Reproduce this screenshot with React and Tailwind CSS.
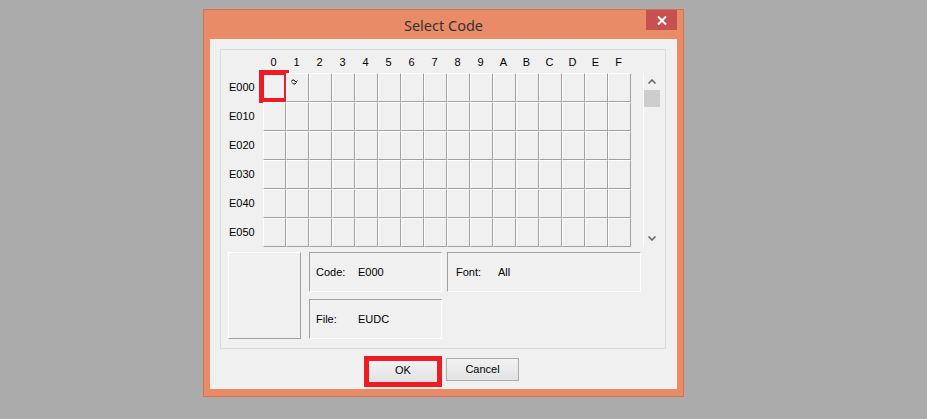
import React from "react";

const cols = ["0","1","2","3","4","5","6","7","8","9","A","B","C","D","E","F"];
const rows = ["E000","E010","E020","E030","E040","E050"];

function Cell({ r, c }) {
  return (
    <div className="relative w-[23px] h-[29px] border border-t-white border-l-white border-r-[#a0a0a0] border-b-[#a0a0a0] bg-[#f0f0f0]">
      {r === 0 && c === 1 && (
        <svg className="absolute left-[4px] top-[5px]" width="7" height="6" viewBox="0 0 7 6">
          <path d="M0.5 2.5 L1.5 1 L3 1 L4 2.5 L5.5 2.5 L6.5 1.5 M1 3.5 L2.5 5 L4 5 L5.5 3.5" fill="none" stroke="#000" strokeWidth="1" />
        </svg>
      )}
      {r === 0 && c === 0 && (
        <div className="absolute left-[-5px] top-[-4px] w-[30px] h-[33px] border-[5px] border-[#ed1c24]" />
      )}
    </div>
  );
}

export default function App() {
  const font = { fontFamily: '"Liberation Sans", Arial, sans-serif' };
  return (
    <div className="w-[927px] h-[419px] bg-[#ababab] pl-[203px] pt-[9px] overflow-hidden" style={font}>
      <div className="w-[481px] h-[388px] bg-[#ea8b67] border border-[#cf7655] flex flex-col">
        {/* title bar */}
        <div className="relative h-[29px] flex items-center justify-center">
          <span
            className="text-[14.5px] text-[#333333] leading-none mt-[1px]"
            style={{ fontFamily: '"Noto Sans", "Open Sans", sans-serif' }}
          >
            Select Code
          </span>
          <div className="absolute right-[6px] top-0 w-[31px] h-[20px] bg-[#c75050] flex items-center justify-center">
            <svg width="10" height="9" viewBox="0 0 10 9">
              <path d="M1 0.5 L9 8.5 M9 0.5 L1 8.5" stroke="#fff" strokeWidth="2" />
            </svg>
          </div>
        </div>
        {/* client */}
        <div className="mx-[6px] w-[467px] h-[350px] bg-[#f0f0f0] pt-[10px] pl-[10px] flex flex-col">
          <div className="w-[446px] h-[300px] border border-[#dcdcdc] flex flex-col text-[11px] text-black">
            {/* header row */}
            <div className="flex h-[23px] items-center">
              <div className="w-[41px]" />
              {cols.map((c) => (
                <div key={c} className="w-[23px] text-center leading-none pt-[1px]">{c}</div>
              ))}
            </div>
            {/* grid + scroll */}
            <div className="flex">
              <div className="w-[42px] flex flex-col">
                {rows.map((r) => (
                  <div key={r} className="h-[29px] flex items-center pl-[8px]">{r}</div>
                ))}
              </div>
              <div className="grid grid-cols-[repeat(16,23px)]">
                {rows.map((r, ri) =>
                  cols.map((c, ci) => <Cell key={r + c} r={ri} c={ci} />)
                )}
              </div>
              <div className="ml-[12px] w-[17px] h-[174px] border-l border-white bg-[#f0f0f0] flex flex-col items-center">
                <div className="h-[17px] w-full flex items-center justify-center">
                  <svg width="8" height="5" viewBox="0 0 8 5">
                    <path d="M0.5 4.5 L4 1 L7.5 4.5" fill="none" stroke="#606060" strokeWidth="1.5" />
                  </svg>
                </div>
                <div className="w-[16px] h-[17px] bg-[#cdcdcd]" />
                <div className="flex-1" />
                <div className="h-[17px] w-full flex items-center justify-center">
                  <svg width="8" height="5" viewBox="0 0 8 5">
                    <path d="M0.5 0.5 L4 4 L7.5 0.5" fill="none" stroke="#606060" strokeWidth="1.5" />
                  </svg>
                </div>
              </div>
            </div>
            {/* bottom info */}
            <div className="flex mt-[5px] ml-[7px]">
              <div className="w-[73px] h-[87px] border border-t-white border-l-white border-r-[#a0a0a0] border-b-[#a0a0a0]" />
              <div className="ml-[8px] flex flex-col gap-[7px]">
                <div className="flex gap-[5px]">
                  <div className="w-[133px] h-[40px] border border-t-[#a0a0a0] border-l-[#a0a0a0] border-r-white border-b-white flex items-center">
                    <span className="w-[48px] shrink-0 pl-[6px]">Code:</span>
                    <span>E000</span>
                  </div>
                  <div className="w-[194px] h-[40px] border border-t-[#a0a0a0] border-l-[#a0a0a0] border-r-white border-b-white flex items-center">
                    <span className="w-[50px] shrink-0 pl-[8px]">Font:</span>
                    <span>All</span>
                  </div>
                </div>
                <div className="w-[133px] h-[40px] border border-t-[#a0a0a0] border-l-[#a0a0a0] border-r-white border-b-white flex items-center">
                  <span className="w-[48px] shrink-0 pl-[6px]">File:</span>
                  <span>EUDC</span>
                </div>
              </div>
            </div>
          </div>
          {/* buttons */}
          <div className="flex items-start ml-[144px] mt-[7px] text-[11px] text-black">
            <div className="w-[78px] h-[31px] border-[5px] border-[#ed1c24]">
              <div className="w-full h-full bg-gradient-to-b from-[#f2f2f2] to-[#e3e3e3] flex items-center justify-center pb-[3px]">
                OK
              </div>
            </div>
            <div className="ml-[4px] mt-[2px] w-[73px] h-[23px] border border-[#acacac] bg-gradient-to-b from-[#f2f2f2] to-[#e3e3e3] flex items-center justify-center">
              Cancel
            </div>
          </div>
        </div>
      </div>
    </div>
  );
}
